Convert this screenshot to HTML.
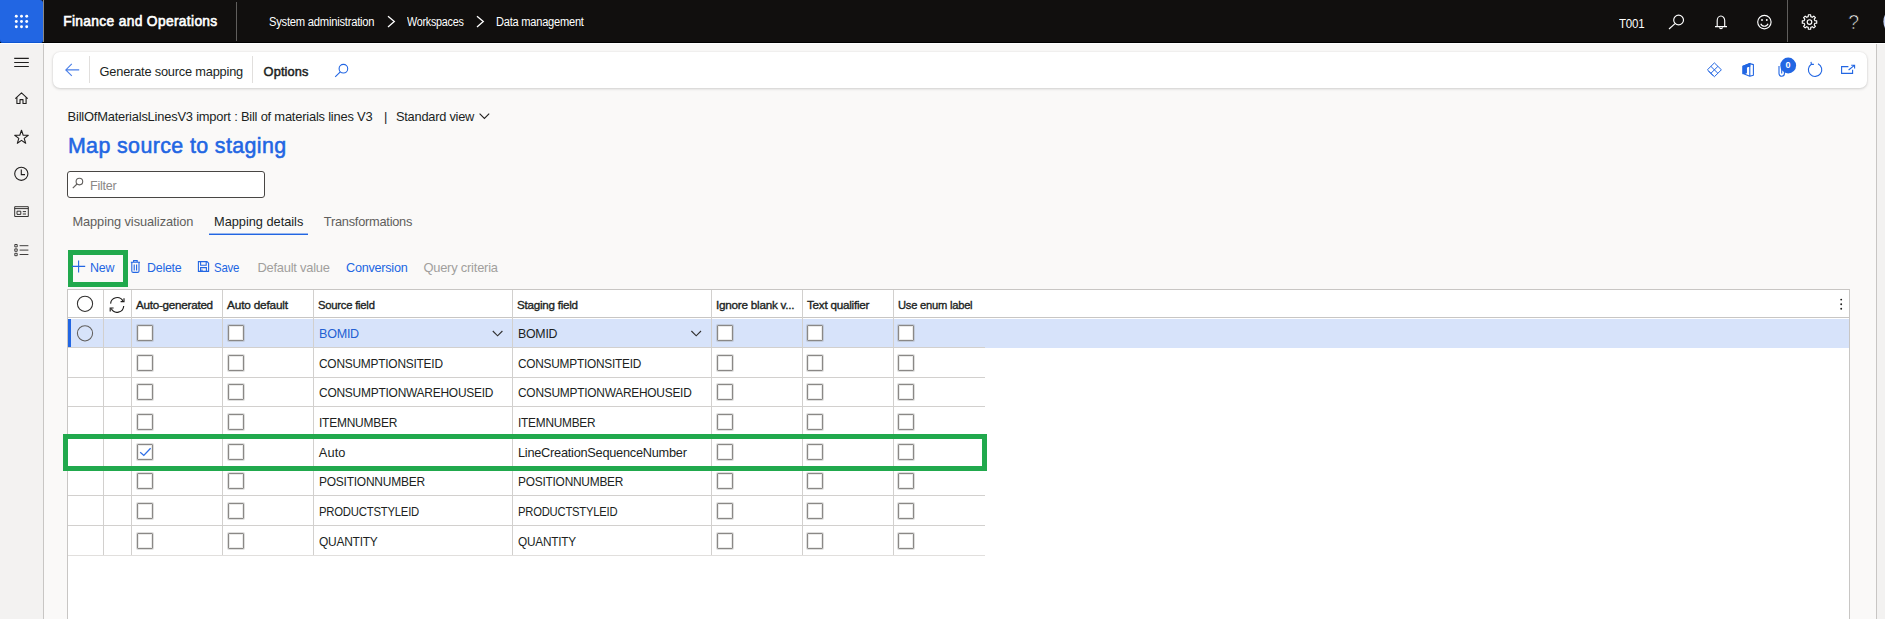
<!DOCTYPE html>
<html lang="en"><head><meta charset="utf-8"><title>Map source to staging</title>
<style>
html,body{margin:0;padding:0}
body{width:1885px;height:619px;overflow:hidden;position:relative;background:#faf9f8;font-family:"Liberation Sans",sans-serif;}
.a{position:absolute}
.t{position:absolute;white-space:nowrap;line-height:1;}
svg{position:absolute;overflow:visible}
.cb{position:absolute;width:14px;height:14px;border:1px solid #8a8886;border-radius:1px;background:#fff;box-shadow:0 0 0 1px rgba(138,136,134,.28),inset 0 0 0 1px rgba(138,136,134,.18);box-sizing:content-box}
.vl{position:absolute;width:1px;background:#d2d0ce}
.hl{position:absolute;height:1px;background:#d2d0ce}
</style></head><body>

<div class="a" style="left:0;top:0;width:1885px;height:42px;background:#110f0e"></div>
<div class="a" style="left:0;top:42px;width:43px;height:577px;background:#f3f2f1;border-right:1px solid #c8c6c4"></div>
<div class="a" style="left:1876px;top:42px;width:9px;height:577px;background:#f3f2f1;border-left:1px solid #c8c6c4"></div>
<div class="a" style="left:0;top:42px;width:1885px;height:1px;background:#000"></div>
<div class="a" style="left:0;top:43px;width:1885px;height:1px;background:#fff"></div>
<div class="a" style="left:0;top:0;width:43px;height:43px;background:#2266e3;border-radius:0 3px 3px 3px;box-shadow:inset 0 -1px 0 #0c55d2"></div>
<div class="a" style="left:43px;top:0;width:1px;height:42px;background:#8a8886"></div>
<div class="a" style="left:236px;top:2px;width:1px;height:39px;background:#605e5c"></div>
<div class="a" style="left:1787px;top:0;width:1px;height:42px;background:#605e5c"></div>
<div class="a" style="left:53px;top:52px;width:1814px;height:36px;background:#fff;border-radius:7px;box-shadow:0 1px 3px rgba(0,0,0,.16),0 0 2px rgba(0,0,0,.08)"></div>
<div class="a" style="left:89px;top:56px;width:1px;height:27px;background:#e1dfdd"></div>
<div class="a" style="left:252px;top:56px;width:1px;height:27px;background:#e1dfdd"></div>
<div class="a" style="left:67px;top:171px;width:196px;height:24.6px;border:1px solid #484644;border-radius:3px;background:#fff"></div>
<div class="a" style="left:209px;top:233px;width:99px;height:1px;background:#2266e3;opacity:.45"></div>
<div class="a" style="left:209px;top:234px;width:99px;height:1px;background:#2266e3"></div>
<div class="a" style="left:67px;top:289px;width:1783px;height:340px;background:#fff;border:1px solid #c8c6c4;box-sizing:border-box"></div>
<div class="a" style="left:68px;top:319px;width:1781px;height:28.5px;background:#d7e3fa"></div>
<div class="a" style="left:67.5px;top:319px;width:3.5px;height:28.5px;background:#2266e3"></div>
<div class="hl" style="left:68px;top:317px;width:1781px;background:#c8c6c4"></div>
<div class="hl" style="left:68px;top:347px;width:917px"></div>
<div class="hl" style="left:68px;top:377px;width:917px"></div>
<div class="hl" style="left:68px;top:406px;width:917px"></div>
<div class="hl" style="left:68px;top:436px;width:917px"></div>
<div class="hl" style="left:68px;top:466px;width:917px"></div>
<div class="hl" style="left:68px;top:495px;width:917px"></div>
<div class="hl" style="left:68px;top:525px;width:917px"></div>
<div class="hl" style="left:68px;top:555px;width:917px;background:#e1dfdd"></div>
<div class="vl" style="left:103px;top:290px;height:265px"></div>
<div class="vl" style="left:131px;top:290px;height:265px"></div>
<div class="vl" style="left:222px;top:290px;height:265px"></div>
<div class="vl" style="left:313px;top:290px;height:265px"></div>
<div class="vl" style="left:512px;top:290px;height:265px"></div>
<div class="vl" style="left:711px;top:290px;height:265px"></div>
<div class="vl" style="left:802px;top:290px;height:265px"></div>
<div class="vl" style="left:893px;top:290px;height:265px"></div>
<div class="cb" style="left:137px;top:325px"></div>
<div class="cb" style="left:228px;top:325px"></div>
<div class="cb" style="left:717px;top:325px"></div>
<div class="cb" style="left:807px;top:325px"></div>
<div class="cb" style="left:898px;top:325px"></div>
<div class="cb" style="left:137px;top:355px"></div>
<div class="cb" style="left:228px;top:355px"></div>
<div class="cb" style="left:717px;top:355px"></div>
<div class="cb" style="left:807px;top:355px"></div>
<div class="cb" style="left:898px;top:355px"></div>
<div class="cb" style="left:137px;top:384px"></div>
<div class="cb" style="left:228px;top:384px"></div>
<div class="cb" style="left:717px;top:384px"></div>
<div class="cb" style="left:807px;top:384px"></div>
<div class="cb" style="left:898px;top:384px"></div>
<div class="cb" style="left:137px;top:414px"></div>
<div class="cb" style="left:228px;top:414px"></div>
<div class="cb" style="left:717px;top:414px"></div>
<div class="cb" style="left:807px;top:414px"></div>
<div class="cb" style="left:898px;top:414px"></div>
<div class="cb" style="left:137px;top:444px"></div>
<div class="cb" style="left:228px;top:444px"></div>
<div class="cb" style="left:717px;top:444px"></div>
<div class="cb" style="left:807px;top:444px"></div>
<div class="cb" style="left:898px;top:444px"></div>
<div class="cb" style="left:137px;top:473px"></div>
<div class="cb" style="left:228px;top:473px"></div>
<div class="cb" style="left:717px;top:473px"></div>
<div class="cb" style="left:807px;top:473px"></div>
<div class="cb" style="left:898px;top:473px"></div>
<div class="cb" style="left:137px;top:503px"></div>
<div class="cb" style="left:228px;top:503px"></div>
<div class="cb" style="left:717px;top:503px"></div>
<div class="cb" style="left:807px;top:503px"></div>
<div class="cb" style="left:898px;top:503px"></div>
<div class="cb" style="left:137px;top:533px"></div>
<div class="cb" style="left:228px;top:533px"></div>
<div class="cb" style="left:717px;top:533px"></div>
<div class="cb" style="left:807px;top:533px"></div>
<div class="cb" style="left:898px;top:533px"></div>
<div class="a" style="left:68px;top:250px;width:60px;height:37px;border:5px solid #21a94d;box-sizing:border-box"></div>
<div class="a" style="left:63px;top:434px;width:924px;height:37px;border:5px solid #21a94d;box-sizing:border-box"></div>
<!-- waffle -->
<svg style="left:0;top:0" width="44" height="42"><g fill="#fff">
<circle cx="16.3" cy="16.3" r="1.45"/><circle cx="21.5" cy="16.3" r="1.45"/><circle cx="26.7" cy="16.3" r="1.45"/>
<circle cx="16.3" cy="21.5" r="1.45"/><circle cx="21.5" cy="21.5" r="1.45"/><circle cx="26.7" cy="21.5" r="1.45"/>
<circle cx="16.3" cy="26.7" r="1.45"/><circle cx="21.5" cy="26.7" r="1.45"/><circle cx="26.7" cy="26.7" r="1.45"/></g></svg>
<!-- header chevrons -->
<svg style="left:0;top:0" width="700" height="42"><g fill="none" stroke="#fff" stroke-width="1.3">
<path d="M388 16.2 L394.3 21.6 L388 27"/><path d="M477 16.2 L483.3 21.6 L477 27"/></g></svg>
<!-- header right icons -->
<svg style="left:0;top:0" width="1885" height="42"><g fill="none" stroke="#fff" stroke-width="1.15">
<circle cx="1678.6" cy="20" r="4.9"/><path d="M1675 23.6 L1669 29"/>
<path d="M1717.2 26.4 V20.6 A3.75 4.6 0 0 1 1724.7 20.6 V26.4 M1715 26.6 H1727 M1719.6 27.4 a1.4 1.2 0 0 0 2.8 0"/>
<circle cx="1764.4" cy="22.1" r="6.7"/><path d="M1760.8 23.8 a3.8 3.6 0 0 0 7.2 0"/>
</g><g fill="#fff"><circle cx="1762" cy="20" r="0.95"/><circle cx="1766.8" cy="20" r="0.95"/></g>
<!-- gear -->
<g fill="none" stroke="#fff"><circle cx="1809.5" cy="22" r="2.3" stroke-width="1.15"/>
<path stroke-width="1.15" stroke-linejoin="round" d="M1808.22 16.65 L1808.36 14.79 L1810.64 14.79 L1810.78 16.65 L1812.37 17.31 L1813.79 16.09 L1815.41 17.71 L1814.19 19.13 L1814.85 20.72 L1816.71 20.86 L1816.71 23.14 L1814.85 23.28 L1814.19 24.87 L1815.41 26.29 L1813.79 27.91 L1812.37 26.69 L1810.78 27.35 L1810.64 29.21 L1808.36 29.21 L1808.22 27.35 L1806.63 26.69 L1805.21 27.91 L1803.59 26.29 L1804.81 24.87 L1804.15 23.28 L1802.29 23.14 L1802.29 20.86 L1804.15 20.72 L1804.81 19.13 L1803.59 17.71 L1805.21 16.09 L1806.63 17.31 Z"/></g>
<circle cx="1897.6" cy="21.5" r="14.2" fill="#c9d6f7"/>
</svg>
<span class="t" style="left:1848.2px;top:12.6px;font-size:19.5px;color:#fff;letter-spacing:0;-webkit-text-stroke:0.7px #110f0e">?</span>
<!-- sidebar icons -->
<svg style="left:0;top:42px" width="43" height="577" viewBox="0 42 43 577"><g fill="none" stroke="#201f1e" stroke-width="1.1">
<path d="M14.2 58.4 H28.8 M14.2 62.5 H28.8 M14.2 66.5 H28.8"/>
<path d="M15.3 98.6 L21.5 92.9 L27.7 98.6 M16.9 97.6 V103.5 H20 V99.6 H23 V103.5 H26.1 V97.6" stroke-linejoin="round"/>
<path d="M21.5 130.3 L23.2 135.2 L28.3 135.3 L24.2 138.4 L25.7 143.3 L21.5 140.4 L17.3 143.3 L18.8 138.4 L14.7 135.3 L19.8 135.2 Z" stroke-linejoin="round"/>
<circle cx="21.3" cy="173.8" r="6.6"/><path d="M21.3 169.4 V174.6 H25"/>
<path stroke-width=".9" d="M14.7 206.7 H28.3 V216.5 H14.7 Z M14.7 208.6 H28.3 M17 211.2 H20.8 V214.4 H17 Z M22.8 211.6 H26 M22.8 214 H26"/>
<path stroke-width=".85" d="M14.8 244.5 h2.4 v2.4 h-2.4 z M14.8 248.9 h2.4 v2.4 h-2.4 z M14.8 253.3 h2.4 v2.4 h-2.4 z M19.6 245.7 H28.4 M19.6 250.1 H28.4 M19.6 254.5 H28.4"/>
</g></svg>
<!-- action bar icons -->
<svg style="left:0;top:48px" width="1885" height="44" viewBox="0 48 1885 44"><g fill="none" stroke="#2266e3" stroke-width="1.1">
<path d="M79.2 69.9 H66 M71.8 63.9 L65.8 69.9 L71.8 75.9" stroke="#4a7fe8"/>
<circle cx="343.4" cy="68.7" r="4.3"/><path d="M340.3 71.9 L335.2 76.9"/>
<!-- power apps diamond -->
<path d="M1707.4 69.8 L1714.4 62.9 L1721.4 69.8 L1714.4 76.7 Z M1710.9 66.4 L1717.9 73.3 M1710.9 73.3 L1717.9 66.4 M1708.6 71.2 L1713.2 75.8" stroke-linejoin="round" stroke-width="1"/>
<!-- office -->
<path d="M1743 66.2 L1749.8 63.6 L1753.4 64.6 V75.2 L1749.8 76.3 L1743 73.6 Z M1749.8 63.6 V76.3 M1743 73.6 L1746.2 72.8 V66.9 L1749.8 66" stroke-linejoin="round"/>
<path d="M1743 66.2 L1749.8 63.6 V66 L1746.2 66.9 V72.8 L1743 73.6 Z" fill="#2266e3"/>
<!-- paperclip -->
<path d="M1779 66 V73.6 a2.7 2.7 0 0 0 5.4 0 V66.5 M1781.7 68 V73.4"/>
<!-- refresh -->
<path d="M1818 63.7 A6.7 6.7 0 1 1 1811.3 64.2 M1811 61.9 L1811.4 64.4 L1813.9 64.4" />
<!-- popout -->
<path d="M1848.4 66.6 H1841.6 V73.4 H1852.6 V69.8 M1848.6 70 L1854.4 65.4 M1851.2 65.2 H1854.6 V68.4"/>
</g>
<circle cx="1788.2" cy="65.5" r="7.9" fill="#2266e3"/>
</svg>
<span class="t" style="left:1785.6px;top:61.4px;font-size:9px;font-weight:700;color:#fff">0</span>
<!-- standard view chevron -->
<svg style="left:0;top:100px" width="600" height="100" viewBox="0 100 600 100"><g fill="none" stroke="#201f1e" stroke-width="1.1">
<path d="M479.6 113.6 L484.4 118.4 L489.2 113.6"/></g>
<g fill="none" stroke="#605e5c" stroke-width="1.1"><circle cx="79.4" cy="181.6" r="3.3"/><path d="M77 184 L72.8 188.2"/></g>
</svg>
<!-- toolbar icons -->
<svg style="left:0;top:250px" width="600" height="40" viewBox="0 250 600 40"><g fill="none" stroke="#2266e3" stroke-width="1.1">
<path d="M72 266.4 H85.2 M78.6 260.4 V272.6"/>
<path d="M130.8 262.2 H140 M133.6 262 V260.6 H137.2 V262 M131.8 262.4 V271 a1.4 1.4 0 0 0 1.4 1.4 H137.6 a1.4 1.4 0 0 0 1.4 -1.4 V262.4 M134.2 264.4 V270.4 M136.6 264.4 V270.4"/>
<path d="M198.4 261.6 H207 L208.6 263.2 V271.4 H198.4 Z M200.6 261.8 V265.2 H206.2 V261.8 M200.6 271.2 V267.6 H206.4 V271.2 M202 269.4 V271.2"/>
</g></svg>
<!-- grid icons -->
<svg style="left:0;top:288px" width="1885" height="331" viewBox="0 288 1885 331">
<g fill="none" stroke-width="1.05">
<circle cx="85" cy="303.8" r="7.6" stroke="#323130"/>
<circle cx="85" cy="333.3" r="7.6" stroke="#605e5c"/>
<g stroke="#201f1e" stroke-width="1.15">
<path d="M110.6 303.6 A6.6 6.6 0 0 1 122.9 300.9 M123.7 306 A6.6 6.6 0 0 1 111.2 308.6"/>
<path d="M124 298.2 V301.6 H120.6 M110.2 311.4 V308 H113.6"/>
</g>
<g stroke="#323130" stroke-width="1.15">
<path d="M492.8 331 L497.6 335.8 L502.4 331"/><path d="M691.4 331 L696.2 335.8 L701 331"/>
</g>
<path d="M140.2 452.3 L143.8 455.4 L150.6 448.2" stroke="#2f6fe6" stroke-width="1.3"/>
</g>
<g fill="#201f1e"><circle cx="1841.2" cy="299.6" r="0.95"/><circle cx="1841.2" cy="304.2" r="0.95"/><circle cx="1841.2" cy="308.8" r="0.95"/></g>
</svg>

<span class="t" style="left:63.20px;top:15.32px;font-size:13.80px;color:#ffffff;letter-spacing:0.325px;-webkit-text-stroke:0.60px #ffffff;">Finance and Operations</span>
<span class="t" style="left:268.90px;top:15.84px;font-size:12.00px;color:#ffffff;letter-spacing:-0.250px;transform:scaleX(0.9332);transform-origin:0 0;">System administration</span>
<span class="t" style="left:407.00px;top:15.84px;font-size:12.00px;color:#ffffff;letter-spacing:-0.250px;transform:scaleX(0.8952);transform-origin:0 0;">Workspaces</span>
<span class="t" style="left:496.10px;top:15.84px;font-size:12.00px;color:#ffffff;letter-spacing:-0.250px;transform:scaleX(0.9230);transform-origin:0 0;">Data management</span>
<span class="t" style="left:1618.60px;top:18.33px;font-size:12.60px;color:#ffffff;letter-spacing:-0.250px;transform:scaleX(0.9153);transform-origin:0 0;">T001</span>
<span class="t" style="left:99.60px;top:66.16px;font-size:12.80px;color:#201f1e;letter-spacing:-0.199px;">Generate source mapping</span>
<span class="t" style="left:263.60px;top:66.16px;font-size:12.80px;color:#201f1e;letter-spacing:0.115px;-webkit-text-stroke:0.50px #201f1e;">Options</span>
<span class="t" style="left:67.60px;top:111.08px;font-size:12.90px;color:#201f1e;letter-spacing:-0.204px;">BillOfMaterialsLinesV3 import : Bill of materials lines V3</span>
<span class="t" style="left:384.00px;top:111.08px;font-size:12.90px;color:#201f1e;">|</span>
<span class="t" style="left:395.60px;top:111.08px;font-size:12.90px;color:#201f1e;letter-spacing:-0.250px;transform:scaleX(0.9951);transform-origin:0 0;">Standard view</span>
<span class="t" style="left:67.90px;top:135.88px;font-size:21.40px;color:#2266e3;letter-spacing:0.392px;-webkit-text-stroke:0.55px #2266e3;">Map source to staging</span>
<span class="t" style="left:90.30px;top:180.08px;font-size:12.90px;color:#8a8886;letter-spacing:-0.250px;transform:scaleX(0.9742);transform-origin:0 0;">Filter</span>
<span class="t" style="left:72.40px;top:216.16px;font-size:12.80px;color:#605e5c;letter-spacing:-0.063px;">Mapping visualization</span>
<span class="t" style="left:214.00px;top:216.16px;font-size:12.80px;color:#201f1e;letter-spacing:-0.024px;">Mapping details</span>
<span class="t" style="left:323.80px;top:216.16px;font-size:12.80px;color:#605e5c;letter-spacing:-0.242px;">Transformations</span>
<span class="t" style="left:90.30px;top:262.08px;font-size:12.90px;color:#2266e3;letter-spacing:-0.250px;transform:scaleX(0.9645);transform-origin:0 0;">New</span>
<span class="t" style="left:147.10px;top:262.08px;font-size:12.90px;color:#2266e3;letter-spacing:-0.250px;transform:scaleX(0.9635);transform-origin:0 0;">Delete</span>
<span class="t" style="left:214.00px;top:262.08px;font-size:12.90px;color:#2266e3;letter-spacing:-0.250px;transform:scaleX(0.8869);transform-origin:0 0;">Save</span>
<span class="t" style="left:257.40px;top:262.08px;font-size:12.90px;color:#a19f9d;letter-spacing:-0.229px;">Default value</span>
<span class="t" style="left:345.80px;top:262.08px;font-size:12.90px;color:#2266e3;letter-spacing:-0.250px;transform:scaleX(0.9801);transform-origin:0 0;">Conversion</span>
<span class="t" style="left:423.40px;top:262.08px;font-size:12.90px;color:#a19f9d;letter-spacing:-0.213px;">Query criteria</span>
<span class="t" style="left:136.20px;top:300.01px;font-size:11.80px;color:#201f1e;letter-spacing:-0.250px;transform:scaleX(0.9873);transform-origin:0 0;-webkit-text-stroke:0.35px #201f1e;">Auto-generated</span>
<span class="t" style="left:227.10px;top:300.01px;font-size:11.80px;color:#201f1e;letter-spacing:-0.188px;-webkit-text-stroke:0.35px #201f1e;">Auto default</span>
<span class="t" style="left:318.30px;top:300.01px;font-size:11.80px;color:#201f1e;letter-spacing:-0.250px;transform:scaleX(0.9555);transform-origin:0 0;-webkit-text-stroke:0.35px #201f1e;">Source field</span>
<span class="t" style="left:517.20px;top:300.01px;font-size:11.80px;color:#201f1e;letter-spacing:-0.250px;transform:scaleX(0.9849);transform-origin:0 0;-webkit-text-stroke:0.35px #201f1e;">Staging field</span>
<span class="t" style="left:716.00px;top:300.01px;font-size:11.80px;color:#201f1e;letter-spacing:-0.250px;transform:scaleX(0.9942);transform-origin:0 0;-webkit-text-stroke:0.35px #201f1e;">Ignore blank v...</span>
<span class="t" style="left:806.90px;top:300.01px;font-size:11.80px;color:#201f1e;letter-spacing:-0.250px;transform:scaleX(0.9923);transform-origin:0 0;-webkit-text-stroke:0.35px #201f1e;">Text qualifier</span>
<span class="t" style="left:897.90px;top:300.01px;font-size:11.80px;color:#201f1e;letter-spacing:-0.250px;transform:scaleX(0.9477);transform-origin:0 0;-webkit-text-stroke:0.35px #201f1e;">Use enum label</span>
<span class="t" style="left:318.80px;top:328.16px;font-size:12.80px;color:#2460d2;letter-spacing:-0.250px;transform:scaleX(0.9816);transform-origin:0 0;">BOMID</span>
<span class="t" style="left:518.40px;top:328.16px;font-size:12.80px;color:#201f1e;letter-spacing:-0.250px;transform:scaleX(0.9645);transform-origin:0 0;">BOMID</span>
<span class="t" style="left:318.80px;top:358.16px;font-size:12.80px;color:#201f1e;letter-spacing:-0.250px;transform:scaleX(0.9308);transform-origin:0 0;">CONSUMPTIONSITEID</span>
<span class="t" style="left:518.40px;top:358.16px;font-size:12.80px;color:#201f1e;letter-spacing:-0.250px;transform:scaleX(0.9255);transform-origin:0 0;">CONSUMPTIONSITEID</span>
<span class="t" style="left:318.80px;top:387.16px;font-size:12.80px;color:#201f1e;letter-spacing:-0.250px;transform:scaleX(0.9334);transform-origin:0 0;">CONSUMPTIONWAREHOUSEID</span>
<span class="t" style="left:518.40px;top:387.16px;font-size:12.80px;color:#201f1e;letter-spacing:-0.250px;transform:scaleX(0.9296);transform-origin:0 0;">CONSUMPTIONWAREHOUSEID</span>
<span class="t" style="left:318.80px;top:417.16px;font-size:12.80px;color:#201f1e;letter-spacing:-0.250px;transform:scaleX(0.9346);transform-origin:0 0;">ITEMNUMBER</span>
<span class="t" style="left:518.40px;top:417.16px;font-size:12.80px;color:#201f1e;letter-spacing:-0.250px;transform:scaleX(0.9262);transform-origin:0 0;">ITEMNUMBER</span>
<span class="t" style="left:318.80px;top:447.16px;font-size:12.80px;color:#201f1e;letter-spacing:0.091px;">Auto</span>
<span class="t" style="left:518.40px;top:447.16px;font-size:12.80px;color:#201f1e;letter-spacing:-0.250px;transform:scaleX(0.9966);transform-origin:0 0;">LineCreationSequenceNumber</span>
<span class="t" style="left:318.80px;top:476.16px;font-size:12.80px;color:#201f1e;letter-spacing:-0.250px;transform:scaleX(0.9360);transform-origin:0 0;">POSITIONNUMBER</span>
<span class="t" style="left:518.40px;top:476.16px;font-size:12.80px;color:#201f1e;letter-spacing:-0.250px;transform:scaleX(0.9298);transform-origin:0 0;">POSITIONNUMBER</span>
<span class="t" style="left:318.80px;top:506.16px;font-size:12.80px;color:#201f1e;letter-spacing:-0.250px;transform:scaleX(0.8848);transform-origin:0 0;">PRODUCTSTYLEID</span>
<span class="t" style="left:518.40px;top:506.16px;font-size:12.80px;color:#201f1e;letter-spacing:-0.250px;transform:scaleX(0.8786);transform-origin:0 0;">PRODUCTSTYLEID</span>
<span class="t" style="left:318.80px;top:536.16px;font-size:12.80px;color:#201f1e;letter-spacing:-0.250px;transform:scaleX(0.9340);transform-origin:0 0;">QUANTITY</span>
<span class="t" style="left:518.40px;top:536.16px;font-size:12.80px;color:#201f1e;letter-spacing:-0.250px;transform:scaleX(0.9229);transform-origin:0 0;">QUANTITY</span>
</body></html>
